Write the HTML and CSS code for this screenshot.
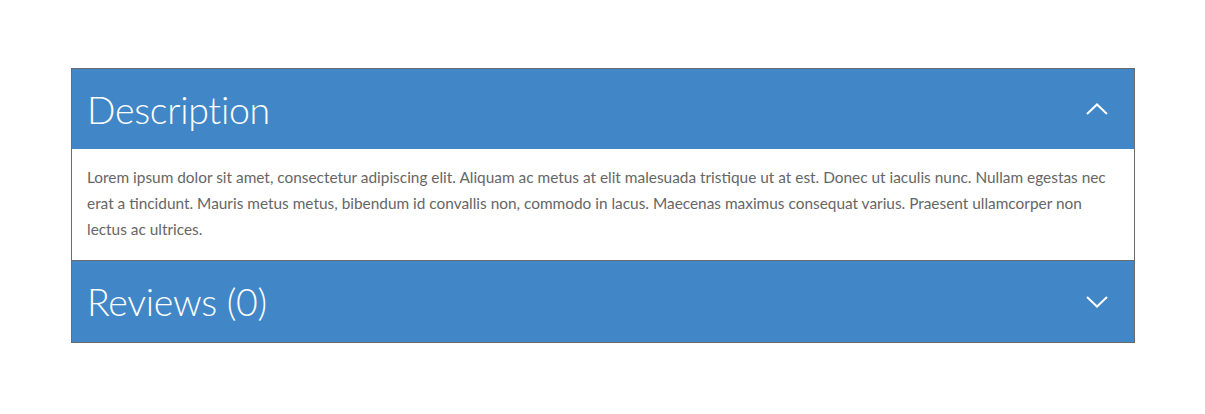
FILE: index.html
```html
<!DOCTYPE html>
<html>
<head>
<meta charset="utf-8">
<link rel="stylesheet" href="styles.css">
</head>
<body>
<div class="accordion">
  <div class="item open">
    <div class="head">
      <span class="title">Description</span>
      <svg class="chev" width="22" height="12" viewBox="0 0 22 12"><polyline points="1,11 11,1.5 21,11" fill="none" stroke="#fff" stroke-width="2"/></svg>
    </div>
    <div class="body">
      <p>Lorem ipsum dolor sit amet, consectetur adipiscing elit. Aliquam ac metus at elit malesuada tristique ut at est. Donec ut iaculis nunc. Nullam egestas nec erat a tincidunt. Mauris metus metus, bibendum id convallis non, commodo in lacus. Maecenas maximus consequat varius. Praesent ullamcorper non lectus ac ultrices.</p>
    </div>
  </div>
  <div class="item">
    <div class="head">
      <span class="title">Reviews (0)</span>
      <svg class="chev" width="22" height="12" viewBox="0 0 22 12"><polyline points="1,1 11,10.5 21,1" fill="none" stroke="#fff" stroke-width="2"/></svg>
    </div>
  </div>
</div>
</body>
</html>
```
FILE: styles.css
```css
html, body {
  margin: 0;
  padding: 0;
  background: #fff;
}
body {
  padding: 68px 70px 0 71px;
  font-family: "Lato", "Liberation Sans", sans-serif;
}
.accordion {
  width: 1062px;
  border: 1px solid #6b6b6b;
}
.item + .item {
  border-top: 1px solid #6b6b6b;
}
.head {
  height: 80px;
  background: #4187c7;
  display: flex;
  align-items: center;
  justify-content: space-between;
  padding: 0 26px 0 15px;
}
.item + .item .head {
  height: 81px;
}
.title {
  color: #fff;
  font-weight: 300;
  font-size: 37.5px;
  letter-spacing: -0.3px;
}
.chev {
  display: block;
}
.body {
  padding: 15px 18px 18px 15px;
}
.body p {
  margin: 0;
  color: #666;
  font-size: 15.4px;
  line-height: 26px;
}
```
